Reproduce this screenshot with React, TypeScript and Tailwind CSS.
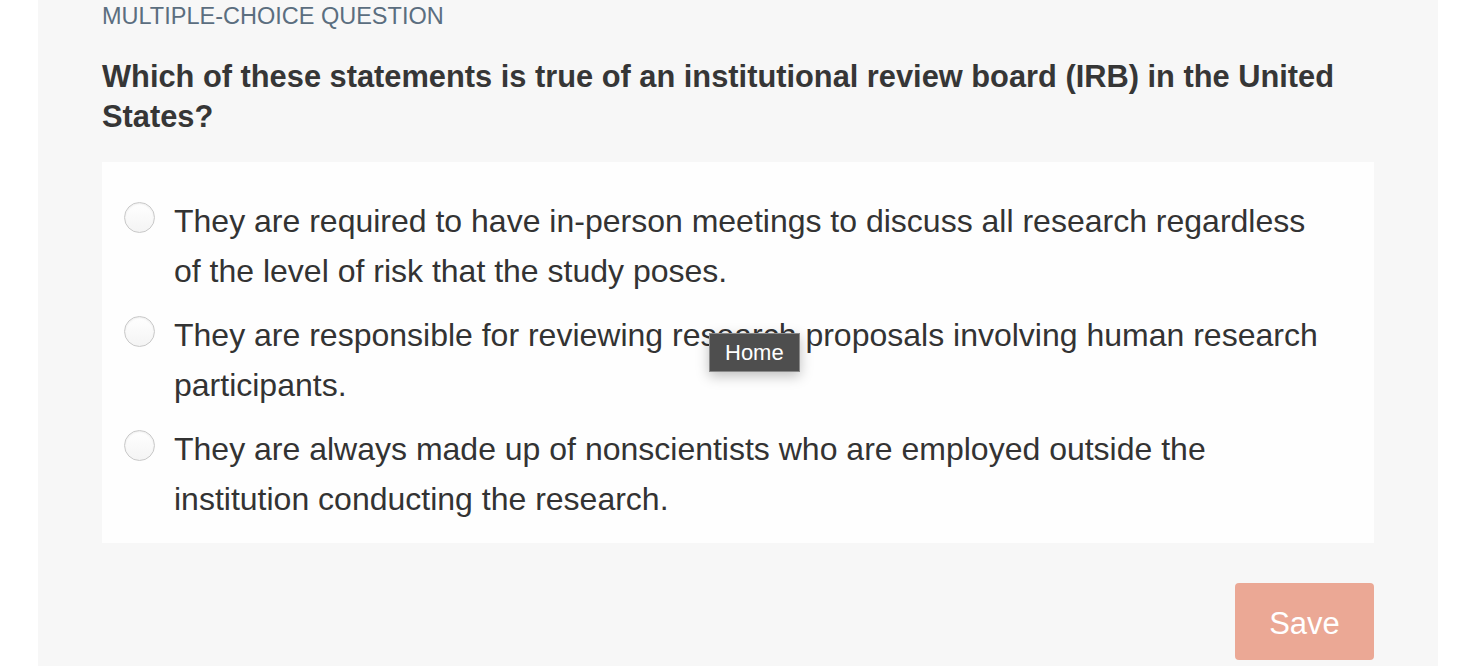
const OPTIONS = [
  "They are required to have in-person meetings to discuss all research regardless of the level of risk that the study poses.",
  "They are responsible for reviewing research proposals involving human research participants.",
  "They are always made up of nonscientists who are employed outside the institution conducting the research.",
];

function Radio() {
  return (
    <span className="mt-[6px] block h-[31px] w-[31px] shrink-0 rounded-full border border-[#c9c9c9] bg-gradient-to-b from-white to-[#f4f4f4] shadow-[inset_0_1px_2px_rgba(0,0,0,0.08)]" />
  );
}

export default function App() {
  return (
    <div className="h-[666px] overflow-hidden bg-white font-['Liberation_Sans',Arial,sans-serif]">
      <div className="ml-[38px] h-full w-[1400px] bg-[#f7f7f7] px-[64px]">
        <p className="pt-[2px] text-[23.5px] leading-[28px] text-[#5b6e7f]">MULTIPLE-CHOICE QUESTION</p>
        <h2 className="mt-[27px] text-[30.8px] font-semibold leading-[40px] text-[#363636]">
          Which of these statements is true of an institutional review board (IRB) in the United States?
        </h2>
        <div className="mt-[25px] flex flex-col gap-[14px] bg-[#fefefe] pt-[34px] pr-[40px] pb-[19px] pl-[22px]">
          {OPTIONS.map((text, i) => (
            <label key={i} className="relative flex gap-[19px] text-[32px] leading-[50px] text-[#333]">
              <Radio />
              <span>{text}</span>
              {i === 1 && (
                <span className="absolute top-[23px] left-[585px] border border-[#8a8a8a] bg-[#4e4e4e] px-[15px] text-[22px] leading-[37px] text-white shadow-[0_4px_12px_rgba(0,0,0,0.25)]">
                  Home
                </span>
              )}
            </label>
          ))}
        </div>
        <div className="mt-[40px] flex justify-end">
          <button className="h-[77px] w-[139px] rounded-[4px] bg-[#eba895] pt-[5px] text-[31px] text-white">Save</button>
        </div>
      </div>
    </div>
  );
}
